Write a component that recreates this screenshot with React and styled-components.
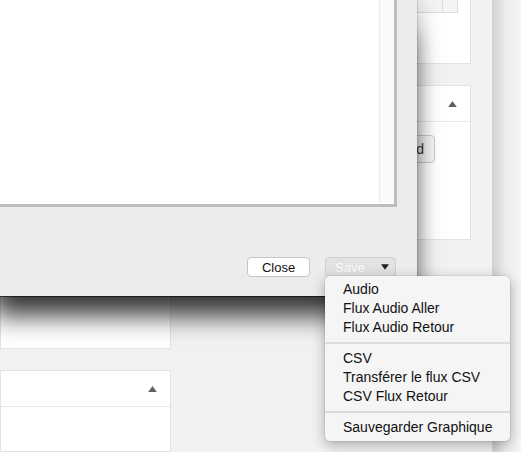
import React from 'react';
import styled, {createGlobalStyle} from 'styled-components';

const GlobalStyle = createGlobalStyle`
    html, body {
        margin: 0;
        padding: 0;
        background: #f2f2f2;
        overflow: hidden;
    }
    * {
        box-sizing: border-box;
    }
`;

const saveOptions = [
    ['Audio', 'Flux Audio Aller', 'Flux Audio Retour'],
    ['CSV', 'Transférer le flux CSV', 'CSV Flux Retour'],
    ['Sauvegarder Graphique'],
];

const Caret = ({up, color = '#5c6066', size = 9}) => (
    <svg width={size} height={Math.round(size * 0.7)} viewBox="0 0 10 7">
        {up
            ? <path d="M5 0 L10 7 L0 7 Z" fill={color}/>
            : <path d="M0 0 L10 0 L5 7 Z" fill={color}/>}
    </svg>
);

const App = () => {
    return(
        <>
            <GlobalStyle/>
            <Screen>
                {/* page behind the dialog */}
                <Backdrop>
                    <Column $top={200}>
                        <Card $h={149}/>
                        <Card $grow>
                            <CardHeader><Caret up/></CardHeader>
                        </Card>
                    </Column>
                    <div/>
                    <Column $top={0}>
                        <Card $h={65} $lift>
                            <Table>
                                <Cell/>
                                <Cell/>
                            </Table>
                        </Card>
                        <Card $h={155}>
                            <CardHeader><Caret up/></CardHeader>
                            <CardBody>
                                <PageButton>Download</PageButton>
                            </CardBody>
                        </Card>
                    </Column>
                    <div/>
                    <EdgeStrip/>
                </Backdrop>

                {/* modal dialog, its left edge sits off screen */}
                <Dialog>
                    <ContentBox>
                        <Scrollbar/>
                    </ContentBox>
                    <Footer>
                        <Button>Close</Button>
                        <SaveWrap>
                            <SaveButton disabled>
                                <span>Save</span>
                                <Caret color="#222" size={8}/>
                            </SaveButton>
                            <Menu>
                                {saveOptions.map((group, i) => (
                                    <React.Fragment key={i}>
                                        {i > 0 && <Separator/>}
                                        {group.map(item => (
                                            <MenuItem key={item}>{item}</MenuItem>
                                        ))}
                                    </React.Fragment>
                                ))}
                            </Menu>
                        </SaveWrap>
                    </Footer>
                </Dialog>
            </Screen>
        </>
    );
};

const Screen = styled.div`
    position: relative;
    width: 521px;
    height: 452px;
    overflow: hidden;
    font-family: "Liberation Sans", Arial, sans-serif;
    background: #f2f2f2;
`;

const Backdrop = styled.div`
    display: grid;
    grid-template-columns: 171px 1fr 171px 21px 29px;
    height: 100%;
`;

const Column = styled.div`
    display: flex;
    flex-direction: column;
    gap: 21px;
    padding-top: ${p => p.$top}px;
    height: 100%;
`;

const Card = styled.div`
    background: #ffffff;
    border: 1px solid #e2e2e2;
    height: ${p => p.$h ? `${p.$h}px` : 'auto'};
    flex: ${p => p.$grow ? 1 : 'none'};
    margin-top: ${p => p.$lift ? '-1px' : '0'};
`;

const CardHeader = styled.div`
    height: 36px;
    border-bottom: 1px solid #e6e6e6;
    display: flex;
    align-items: center;
    justify-content: flex-end;
    padding-right: 13px;
`;

const CardBody = styled.div`
    display: flex;
    justify-content: flex-end;
    padding: 13px 35px 0 0;
`;

const PageButton = styled.button`
    height: 28px;
    padding: 0 10px 0 12px;
    background: #f7f7f7;
    border: 1px solid #cccccc;
    border-radius: 4px;
    font-family: "Liberation Sans", Arial, sans-serif;
    font-size: 14px;
    color: #333;
`;

const Table = styled.div`
    display: grid;
    grid-template-columns: 1fr 15px;
    height: 13px;
    margin-right: 12px;
    border-bottom: 1px solid #dcdcdc;
    border-right: 1px solid #dcdcdc;
    background: #f4f4f4;
`;

const Cell = styled.div`
    border-left: 1px solid #dcdcdc;
`;

const EdgeStrip = styled.div`
    border-left: 1px solid #d4d4d4;
    background: linear-gradient(to right, #d2d2d2, #ececec 45%, #f6f6f6);
`;

const Dialog = styled.div`
    position: absolute;
    left: -12px;
    top: 0;
    width: 429px;
    height: 296px;
    background: #ececec;
    display: flex;
    flex-direction: column;
    box-shadow:
        0 1px 0 rgba(0,0,0,0.5),
        0 0 0 1px rgba(0,0,0,0.1),
        0 0 22px rgba(0,0,0,0.25),
        0 26px 24px -6px rgba(0,0,0,0.75);
    z-index: 5;
`;

const ContentBox = styled.div`
    height: 207px;
    width: 409px;
    background: #ffffff;
    border-right: 3px solid #bdbdbd;
    border-bottom: 3px solid #bdbdbd;
    display: flex;
    justify-content: flex-end;
`;

const Scrollbar = styled.div`
    width: 15px;
    background: #fafafa;
    border-left: 1px solid #ebebeb;
`;

const Footer = styled.div`
    flex: 1;
    display: flex;
    align-items: flex-end;
    justify-content: flex-end;
    gap: 15px;
    padding: 0 21px 19px 0;
`;

const Button = styled.button`
    width: 63px;
    height: 20px;
    padding: 0;
    background: #ffffff;
    border: 1px solid #c6c6c6;
    border-radius: 4px;
    font-family: "Liberation Sans", Arial, sans-serif;
    font-size: 13px;
    color: #111;
`;

const SaveWrap = styled.div`
    position: relative;
`;

const SaveButton = styled.button`
    width: 71px;
    height: 20px;
    padding: 0 6px 0 9px;
    background: #e2e2e2;
    border: 1px solid #d0d0d0;
    border-radius: 4px;
    display: flex;
    align-items: center;
    justify-content: space-between;
    font-family: "Liberation Sans", Arial, sans-serif;
    font-size: 13px;
    color: #fbfbfb;
`;

const Menu = styled.div`
    position: absolute;
    left: 0;
    top: calc(100% - 1px);
    width: 185px;
    padding: 4px 0;
    background: #f5f5f5;
    border-radius: 5px;
    box-shadow: 0 0 0 1px rgba(0,0,0,0.06), 0 4px 14px rgba(0,0,0,0.3);
`;

const MenuItem = styled.div`
    height: 19px;
    line-height: 19px;
    padding-left: 18px;
    font-size: 14px;
    color: #111;
    white-space: nowrap;
`;

const Separator = styled.div`
    height: 2px;
    margin: 5px 0;
    background: #dcdcdc;
`;

export default App;
